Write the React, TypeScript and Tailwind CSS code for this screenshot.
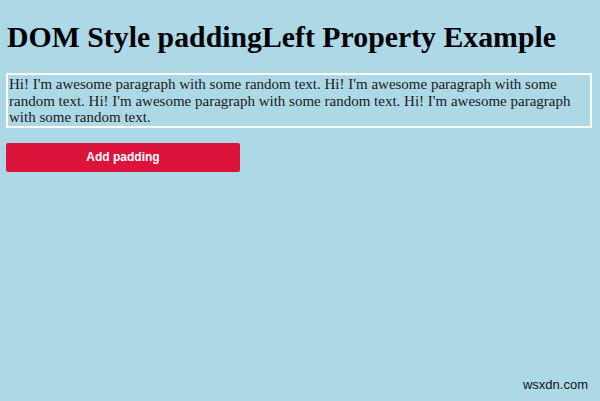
export default function App() {
  return (
    <div className="relative w-[600px] h-[401px] bg-[#add8e6] overflow-hidden px-[6px] pt-[21px] font-['Liberation_Serif',serif]">
      <h1 className="text-[29.8px] font-bold leading-[32px] text-black pl-[1px]">DOM Style paddingLeft Property Example</h1>
      <p className="mt-[20px] border-2 border-white text-[15px] leading-[16.5px] text-[#1a1a1a] px-[1px] pt-[1px] pb-0 w-[586px]">
        Hi! I'm awesome paragraph with some random text. Hi! I'm awesome paragraph with some random text. Hi! I'm awesome paragraph with some random text. Hi! I'm awesome paragraph with some random text.
      </p>
      <button className="mt-[15px] w-[234px] h-[29px] bg-[#dc143c] text-white text-[12px] font-bold rounded-[2px] flex items-center justify-center font-['Liberation_Sans',Arial,sans-serif]">
        Add padding
      </button>
      <div className="absolute right-[12px] bottom-[7px] text-[13px] text-[#111] font-['Liberation_Sans',Arial,sans-serif]">wsxdn.com</div>
    </div>
  );
}
